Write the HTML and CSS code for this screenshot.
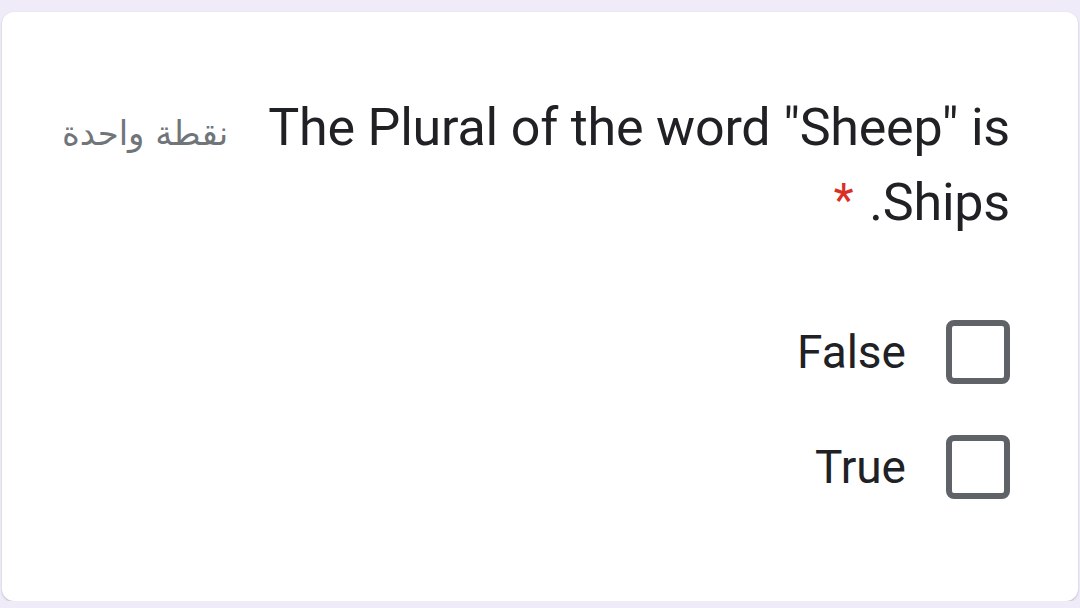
FILE: index.html
```html
<!DOCTYPE html>
<html lang="ar" dir="rtl">
<head>
  <meta charset="UTF-8">
  <title>Question</title>
  <meta name="viewport" content="width=device-width, initial-scale=1.0">
  <link rel="stylesheet" href="styles.css">
</head>
<body>
  <div class="card">
    <div class="header">
      <div class="title">The Plural of the word "Sheep" is Ships.<span class="req">*</span></div>
      <div class="points">نقطة واحدة</div>
    </div>

    <div class="options">
      <label class="option">
        <span class="box"></span>
        <span class="label">False</span>
      </label>
      <label class="option">
        <span class="box"></span>
        <span class="label">True</span>
      </label>
    </div>
  </div>
</body>
</html>
```

FILE: styles.css
```css
body {
  margin: 0;
  padding: 12px 2px 0 2px;
  background: #f0ebf8;
  font-family: Roboto, 'Noto Sans', 'DejaVu Sans', sans-serif;
  color: #202124;
}

.card {
  background: #fff;
  border-radius: 12px;
  box-shadow: 0 1px 2px rgba(60, 64, 67, 0.3);
  height: 589px;
  box-sizing: border-box;
  padding: 79px 68px 0 60px;
}

.header {
  display: flex;
  align-items: baseline;
  justify-content: space-between;
}

.title {
  width: 770px;
  font-size: 52px;
  line-height: 73px;
  letter-spacing: -0.2px;
}

.req {
  color: #d93025;
  font-size: 46px;
  vertical-align: 4px;
  margin-right: 16px;
}

.points {
  font-size: 34px;
  color: #70757a;
  font-family: 'DejaVu Sans', 'Noto Sans', sans-serif;
}

.options {
  margin-top: 81px;
  display: flex;
  flex-direction: column;
  gap: 51px;
}

.option {
  display: flex;
  align-items: center;
  gap: 40px;
}

.box {
  width: 52px;
  height: 52px;
  border: 6px solid #5f6368;
  border-radius: 8px;
}

.label {
  font-size: 46px;
}
```
